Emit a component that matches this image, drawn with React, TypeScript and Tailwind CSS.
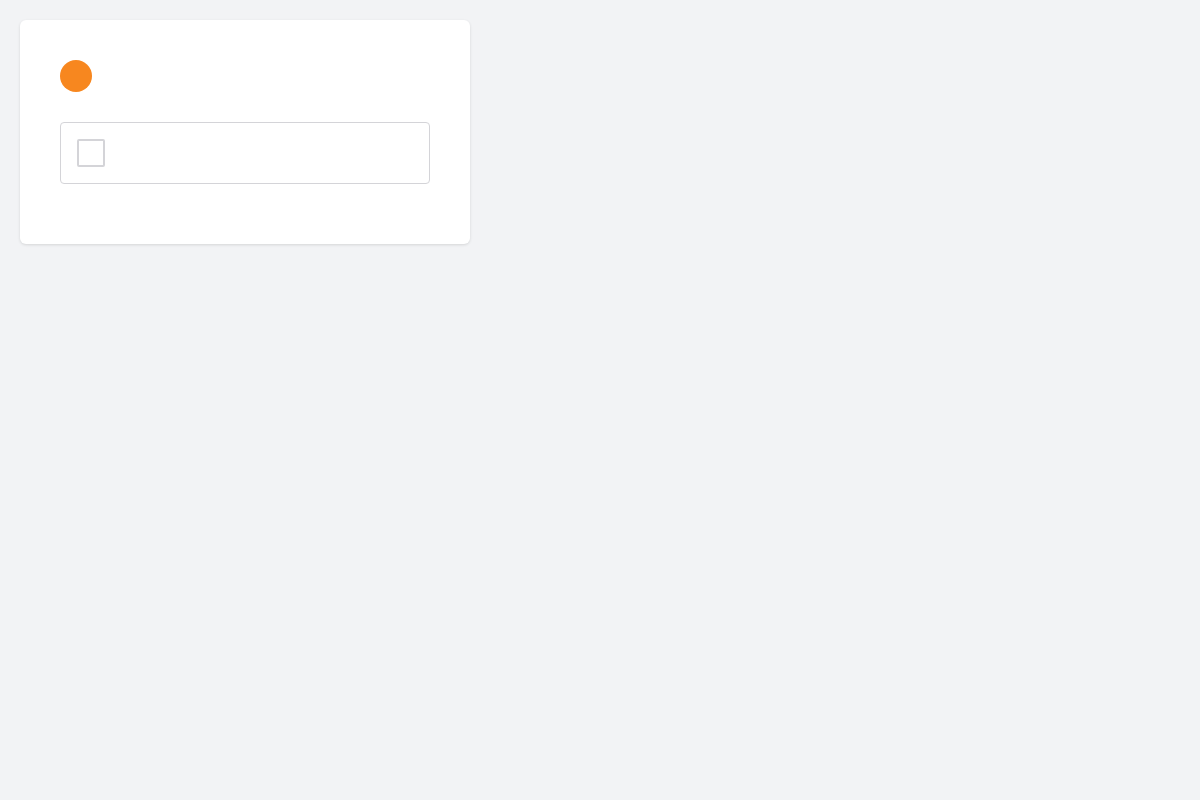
export default function App() {
  return (
    <div className="min-h-screen w-full bg-[#f2f3f5] p-5 font-['Inter',sans-serif]">
      <div className="w-[450px] rounded-md bg-white p-10 pb-[60px] shadow-[0_1px_3px_rgba(0,0,0,0.12)]">
        <div className="h-8 w-8 rounded-full bg-[#f7871f]" />
        <div className="mt-[30px] flex h-[62px] items-center rounded border border-[#d4d4d8] px-4">
          <div className="h-[28px] w-[28px] rounded-[2px] border-2 border-[#d4d4d8]" />
        </div>
      </div>
    </div>
  )
}
